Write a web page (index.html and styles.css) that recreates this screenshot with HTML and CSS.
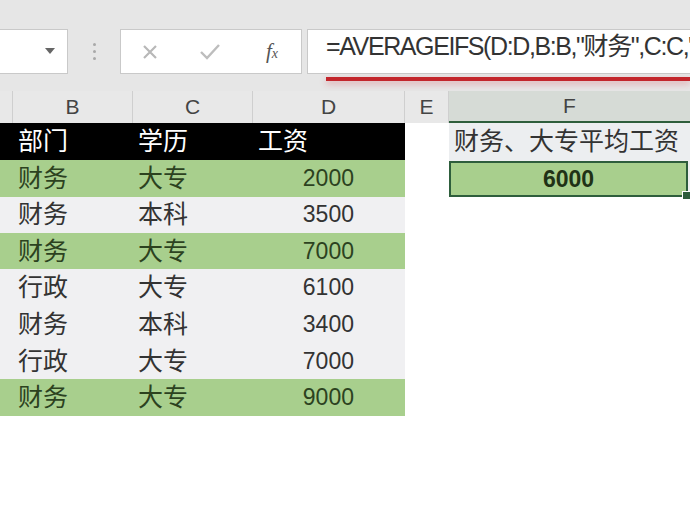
FILE: index.html
```html
<!DOCTYPE html>
<html lang="zh-CN">
<head>
    <meta charset="utf-8">
    <title>AVERAGEIFS 示例</title>
    <link rel="stylesheet" href="styles.css">
</head>
<body>
    <!-- 编辑栏 -->
    <div class="ribbon">
        <div class="namebox"><span class="caret"></span></div>
        <div class="grip"><i></i><i></i><i></i></div>
        <div class="fxbtns">
            <svg class="ico" width="20" height="20" viewBox="0 0 20 20">
                <path d="M4 4 L16 16 M16 4 L4 16" stroke="#b8b8b8" stroke-width="2.2" fill="none"/>
            </svg>
            <svg class="ico" width="22" height="20" viewBox="0 0 22 20">
                <path d="M2 10 L8 16 L20 3" stroke="#bdbdbd" stroke-width="2.4" fill="none"/>
            </svg>
            <span class="fx">f<small>x</small></span>
        </div>
        <div class="formula">=AVERAGEIFS(D:D,B:B,"财务",C:C,"大专")</div>
    </div>
    <div class="mark"></div>

    <div class="sheet">
        <div class="colhead">
            <div></div>
            <div>B</div>
            <div>C</div>
            <div>D</div>
            <div>E</div>
            <div class="sel">F</div>
        </div>

        <div class="row head">
            <div class="c">部门</div>
            <div class="c">学历</div>
            <div class="c">工资</div>
            <div class="e"></div>
            <div class="f title">财务、大专平均工资</div>
        </div>
        <div class="row green">
            <div class="c">财务</div>
            <div class="c">大专</div>
            <div class="c num">2000</div>
            <div class="e"></div>
            <div class="f active">6000<span class="handle"></span></div>
        </div>
        <div class="row">
            <div class="c">财务</div>
            <div class="c">本科</div>
            <div class="c num">3500</div>
            <div class="e"></div>
            <div class="f"></div>
        </div>
        <div class="row green">
            <div class="c">财务</div>
            <div class="c">大专</div>
            <div class="c num">7000</div>
            <div class="e"></div>
            <div class="f"></div>
        </div>
        <div class="row">
            <div class="c">行政</div>
            <div class="c">大专</div>
            <div class="c num">6100</div>
            <div class="e"></div>
            <div class="f"></div>
        </div>
        <div class="row">
            <div class="c">财务</div>
            <div class="c">本科</div>
            <div class="c num">3400</div>
            <div class="e"></div>
            <div class="f"></div>
        </div>
        <div class="row">
            <div class="c">行政</div>
            <div class="c">大专</div>
            <div class="c num">7000</div>
            <div class="e"></div>
            <div class="f"></div>
        </div>
        <div class="row green">
            <div class="c">财务</div>
            <div class="c">大专</div>
            <div class="c num">9000</div>
            <div class="e"></div>
            <div class="f"></div>
        </div>
    </div>
</body>
</html>
```

FILE: styles.css
```css
body {
    margin: 0;
    width: 690px;
    height: 518px;
    overflow: hidden;
    background: #fff;
    font-family: "Liberation Sans", "Noto Sans CJK SC", sans-serif;
    position: relative;
}

/* 编辑栏 */
.ribbon {
    height: 91px;
    background: #e6e6e6;
    display: flex;
    align-items: flex-start;
    padding-top: 29px;
    box-sizing: border-box;
}

.namebox {
    width: 70px;
    height: 45px;
    margin-left: -2px;
    background: #fff;
    border: 1px solid #c9c9c9;
    box-sizing: border-box;
    position: relative;
}

.caret {
    position: absolute;
    right: 12px;
    top: 18px;
    border-left: 5px solid transparent;
    border-right: 5px solid transparent;
    border-top: 6px solid #666;
}

.grip {
    width: 52px;
    height: 45px;
    display: flex;
    flex-direction: column;
    align-items: center;
    justify-content: center;
    gap: 4px;
}

.grip i {
    width: 3px;
    height: 3px;
    border-radius: 50%;
    background: #a9a9a9;
}

.fxbtns {
    width: 182px;
    height: 45px;
    background: #fff;
    border: 1px solid #c9c9c9;
    box-sizing: border-box;
    display: flex;
    align-items: center;
    padding-left: 19px;
    gap: 39px;
}

.fx {
    font-family: "Liberation Serif", serif;
    font-style: italic;
    font-size: 21px;
    color: #555;
    margin-left: 6px;
}

.fx small {
    font-size: 14px;
}

.formula {
    flex: 1;
    margin-left: 5px;
    height: 45px;
    background: #fff;
    border: 1px solid #c9c9c9;
    border-right: none;
    box-sizing: border-box;
    padding-left: 18px;
    font-size: 25px;
    letter-spacing: -1.4px;
    line-height: 33px;
    color: #333;
    white-space: nowrap;
    overflow: hidden;
}

/* 红色下划线标注 */
.mark {
    position: absolute;
    left: 326px;
    right: 0;
    top: 77px;
    height: 4px;
    background: #c3262c;
    box-shadow: 0 3px 6px rgba(220, 90, 100, 0.45);
}

/* 表格 */
.colhead {
    display: grid;
    grid-template-columns: 13px 120px 120px 152px 44px 1fr;
    height: 32px;
    background: #e8e8e8;
}

.colhead div {
    border-right: 1px solid #cfcfcf;
    text-align: center;
    font-size: 21px;
    line-height: 32px;
    color: #444;
}

.colhead .sel {
    background: #d6dbd6;
    border-bottom: 2px solid #2e5e3c;
    line-height: 30px;
    border-right: none;
}

.row {
    display: grid;
    grid-template-columns: 133px 120px 152px 44px 1fr;
    height: 36.6px;
    background: #f0f0f2;
    font-size: 25px;
    color: #333;
    line-height: 36px;
}

.row .c:first-child {
    padding-left: 18px;
}

.row .c:nth-child(2) {
    padding-left: 5px;
}

.row .c:nth-child(3) {
    padding-left: 5px;
}

.row .num {
    font-size: 23px;
    text-align: right;
    padding-right: 51px;
}

.row .e,
.row .f {
    background: #fff;
}

.row.head .c {
    background: #000;
    color: #fff;
}

.row.green .c {
    background: #a8cf8d;
    color: #2c421f;
}

.row .f.title {
    background: #eceef0;
    color: #333;
    padding-left: 5px;
    white-space: nowrap;
}

.row .f.active {
    background: #a8cf8d;
    color: #1f3216;
    font-size: 23px;
    font-weight: bold;
    text-align: center;
    border: 2px solid #2e5e3c;
    margin: 1px 2px 0 0;
    box-sizing: border-box;
    line-height: 32px;
    position: relative;
}

.handle {
    position: absolute;
    right: -5px;
    bottom: -5px;
    width: 7px;
    height: 7px;
    background: #2e5e3c;
    border: 1px solid #fff;
}
```
